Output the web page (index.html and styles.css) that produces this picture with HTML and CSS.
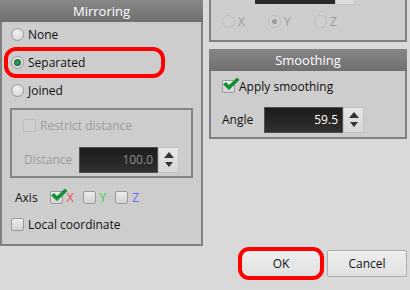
FILE: index.html
```html
<!DOCTYPE html>
<html lang="en">
<head>
    <meta charset="UTF-8">
    <title>Mirroring</title>
    <link rel="stylesheet" href="styles.css">
</head>
<body>
    <div class="window">
        <div class="columns">
            <!-- Mirroring -->
            <section class="panel mirroring">
                <div class="panel-head">Mirroring</div>
                <div class="panel-body">
                    <label class="opt"><span class="radio"></span>None</label>
                    <label class="opt marked"><span class="radio on"></span>Separated</label>
                    <label class="opt"><span class="radio"></span>Joined</label>

                    <div class="group disabled">
                        <label class="opt"><span class="check"></span>Restrict distance</label>
                        <div class="field">
                            <span class="field-label">Distance</span>
                            <div class="spin">
                                <span class="value">100.0</span>
                                <span class="arrows"><i class="up"></i><i class="down"></i></span>
                            </div>
                        </div>
                    </div>

                    <div class="axis">
                        <span class="axis-label">Axis</span>
                        <label class="opt"><span class="check ticked"><svg viewBox="0 0 18 14"><path d="M1 7.5 L4 5 L7 8 L15 0.5 L17.5 3 L7 13 Z"/></svg></span><span class="ax-x">X</span></label>
                        <label class="opt"><span class="check"></span><span class="ax-y">Y</span></label>
                        <label class="opt"><span class="check"></span><span class="ax-z">Z</span></label>
                    </div>

                    <label class="opt"><span class="check"></span>Local coordinate</label>
                </div>
            </section>

            <div class="side">
                <!-- panel scrolled out above -->
                <section class="panel cut">
                    <div class="spin-tail"><span class="tail-value"></span><span class="tail-arrows"></span></div>
                    <div class="radio-row disabled">
                        <label class="opt"><span class="radio"></span>X</label>
                        <label class="opt"><span class="radio on"></span>Y</label>
                        <label class="opt"><span class="radio"></span>Z</label>
                    </div>
                </section>

                <!-- Smoothing -->
                <section class="panel smoothing">
                    <div class="panel-head">Smoothing</div>
                    <div class="panel-body">
                        <label class="opt"><span class="check ticked"><svg viewBox="0 0 18 14"><path d="M1 7.5 L4 5 L7 8 L15 0.5 L17.5 3 L7 13 Z"/></svg></span>Apply smoothing</label>
                        <div class="field">
                            <span class="field-label">Angle</span>
                            <div class="spin">
                                <span class="value">59.5</span>
                                <span class="arrows"><i class="up"></i><i class="down"></i></span>
                            </div>
                        </div>
                    </div>
                </section>
            </div>
        </div>

        <div class="buttons">
            <button class="marked">OK</button>
            <button>Cancel</button>
        </div>
    </div>
</body>
</html>
```

FILE: styles.css
```css
*, *::before, *::after {
    margin: 0;
    padding: 0;
    box-sizing: border-box;
    font-family: "Open Sans", Arial, sans-serif;
}
body {
    width: 410px;
    height: 290px;
    background: #d9d9d9;
    font-size: 12px;
    color: #111;
    overflow: hidden;
}
.columns {
    display: flex;
    gap: 6px;
}

/* Panels */
.panel {
    background: #cdcdcd;
    border: 2px solid #808080;
}
.panel-head {
    height: 22px;
    margin: 0 -2px;
    background: linear-gradient(#878787, #6f6f6f);
    color: #fff;
    font-size: 13px;
    text-align: center;
    line-height: 22px;
}
.mirroring {
    width: 203px;
    height: 246px;
    border-top: none;
}
.mirroring .panel-body {
    display: flex;
    flex-direction: column;
    align-items: flex-start;
    padding: 4px 0 0 9px;
}
.mirroring .panel-body > .opt + .opt {
    margin-top: 12px;
}
.side {
    width: 198px;
    display: flex;
    flex-direction: column;
    gap: 7px;
}
.cut {
    height: 42px;
    border-top: none;
    padding-left: 11px;
}
.smoothing {
    height: 90px;
    border-top: none;
}
.smoothing .panel-body {
    padding: 7px 0 0 11px;
}

/* Options */
.opt {
    display: inline-flex;
    align-items: center;
    height: 16px;
    gap: 4px;
    position: relative;
    white-space: nowrap;
}
.opt.marked::after {
    content: "";
    position: absolute;
    left: -7px;
    top: -7px;
    width: 161px;
    height: 31px;
    border: 4px solid #f00;
    border-radius: 12px;
}
.radio {
    width: 13px;
    height: 13px;
    border-radius: 50%;
    border: 1px solid #9a9a9a;
    background: radial-gradient(circle at 50% 35%, #f2f2f2, #d2d2d2);
    display: flex;
    align-items: center;
    justify-content: center;
}
.radio.on::before {
    content: "";
    width: 5px;
    height: 5px;
    border-radius: 50%;
    background: #1aa04a;
    box-shadow: 0 0 0 1px #2b5c3a;
}
.check {
    width: 13px;
    height: 13px;
    border-radius: 2px;
    border: 1px solid #9a9a9a;
    background: linear-gradient(#ececec, #d4d4d4);
    position: relative;
}
.check svg {
    position: absolute;
    left: -1px;
    top: -4px;
    width: 18px;
    height: 14px;
    fill: #119036;
}

/* Disabled group */
.group {
    margin: 10px 0 0 -1px;
    width: 183px;
    height: 70px;
    border: 2px solid #858585;
    padding: 7px 0 0 11px;
}
.disabled {
    color: #9c9c9c;
}
.disabled .radio,
.disabled .check {
    border-color: #bcbcbc;
    background: #cfcfcf;
}
.disabled .radio.on::before {
    background: #9a9a9a;
    box-shadow: none;
}
.field {
    display: flex;
    align-items: center;
    margin-top: 10px;
}
.field-label {
    width: 42px;
}
.group .field-label {
    width: 55px;
}
.group .field {
    margin-left: 1px;
    margin-top: 11px;
}
.spin {
    display: flex;
    height: 26px;
}
.spin .value {
    width: 79px;
    background: linear-gradient(#1c1c1c, #303030);
    border: 1px solid #505050;
    color: #fff;
    text-align: right;
    padding-right: 4px;
    line-height: 24px;
    font-size: 12px;
}
.disabled .spin .value {
    color: #8c8c8c;
}
.arrows {
    width: 21px;
    background: linear-gradient(#e6e6e6, #d6d6d6);
    border: 1px solid #c4c4c4;
    display: flex;
    flex-direction: column;
    align-items: center;
    justify-content: space-around;
    padding: 3px 0;
}
.arrows .up {
    width: 0;
    height: 0;
    border-left: 5px solid transparent;
    border-right: 5px solid transparent;
    border-bottom: 6px solid #333;
}
.arrows .down {
    width: 0;
    height: 0;
    border-left: 4px solid transparent;
    border-right: 4px solid transparent;
    border-top: 5px solid #333;
    border-bottom: none;
}

/* Axis row */
.axis {
    display: flex;
    align-items: center;
    margin-top: 11px;
    height: 16px;
}
.axis-label {
    margin: 0 12px 0 4px;
}
.axis .opt + .opt {
    margin-left: 9px;
}
.axis + .opt {
    margin-top: 11px;
}
.ax-x { color: #f24a4a; }
.ax-y { color: #3fcf3f; }
.ax-z { color: #6a6aff; }

/* Top right, cut off */
.spin-tail {
    display: flex;
    margin-left: 33px;
    height: 5px;
}
.tail-value {
    width: 80px;
    height: 4px;
    background: #2a2a2a;
}
.tail-arrows {
    width: 20px;
    background: #dcdcdc;
    border: 1px solid #c4c4c4;
    border-top: none;
}
.radio-row {
    display: flex;
    margin-top: 8px;
}
.radio-row .opt {
    width: 46px;
    gap: 3px;
}

/* Buttons */
.buttons {
    display: flex;
    justify-content: flex-end;
    gap: 6px;
    margin: 4px 3px 0 0;
}
button {
    width: 80px;
    height: 27px;
    background: linear-gradient(#eeeeee, #e0e0e0);
    border: 1px solid #adadad;
    border-radius: 2px;
    font-size: 12px;
    color: #111;
    position: relative;
}
button.marked::after {
    content: "";
    position: absolute;
    inset: -4px;
    border: 4px solid #f00;
    border-radius: 11px;
}
```
